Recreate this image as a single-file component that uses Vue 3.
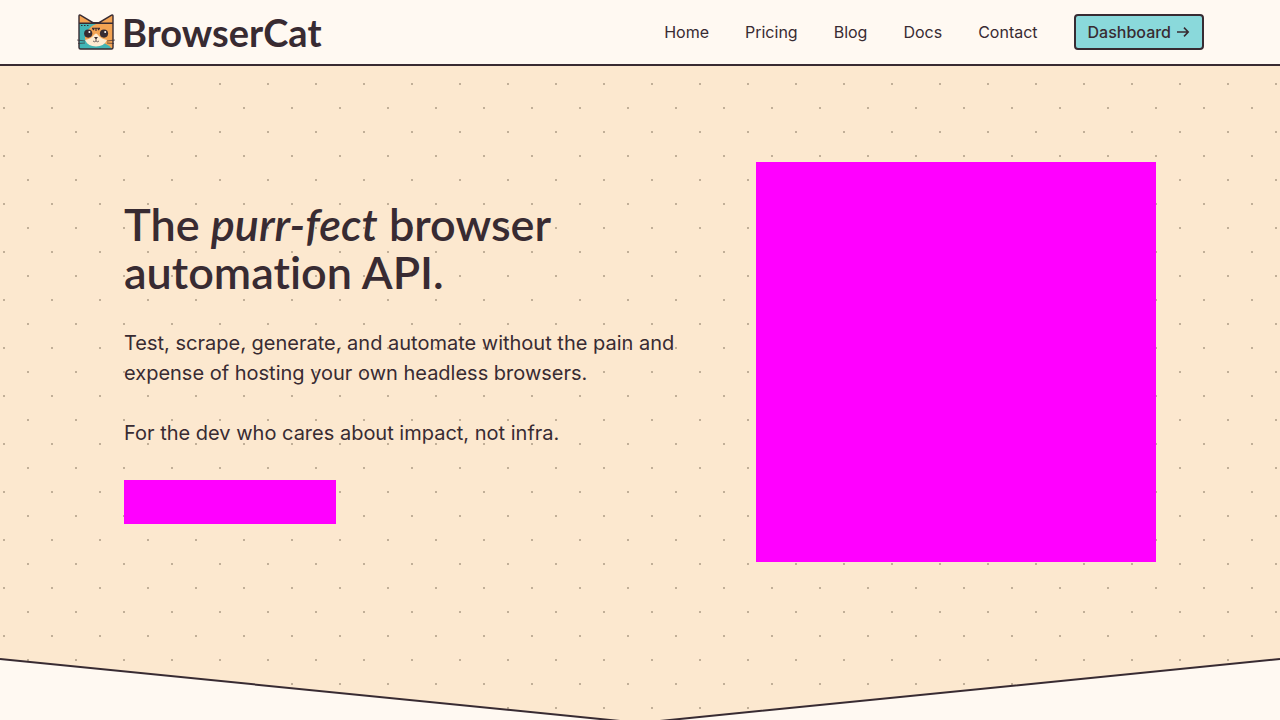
<script setup>
const links = ['Home', 'Pricing', 'Blog', 'Docs', 'Contact']
</script>

<template>
  <div class="page">
    <header class="header">
      <div class="bar">
        <a class="brand" href="#">
          <svg class="cat" viewBox="0 0 40 38" aria-hidden="true">
            <path d="M3 3Q3 1.5 4.4 2.2L17 9.7H23L35.6 2.2Q37 1.5 37 3V34.5Q37 36 35.5 36H4.5Q3 36 3 34.5Z" fill="#f3a353" />
            <path d="M3 10.5H22Q15 13 14 18Q8 20 9 26L12 31L28 30Q33 32 36 36H4.5Q3 36 3 34.5Z" fill="#42b4b5" />
            <path d="M9 24Q9 18 14 15Q17 11 23 11L31 17L32 26Q28 32 20 32T9 24Z" fill="#f3a353" />
            <path d="M9 27Q15 26 18 22Q20 19 22 22Q25 26 31 27Q28 33.5 20 33.5T9 27Z" fill="#fdebd2" />
            <path d="M3 3Q3 1.5 4.4 2.2L17 9.7H23L35.6 2.2Q37 1.5 37 3V34.5Q37 36 35.5 36H4.5Q3 36 3 34.5ZM3 10.2H37" fill="none" stroke="#382b32" stroke-width="1.4" />
            <path d="M5 12.5H6.5M8 12.5H9.5M11 12.5H12.5" stroke="#382b32" stroke-width="1" />
            <path d="M16.5 15.5L18 17M20 15.5V18M23.5 15.5L22 17M16 15.2H24" stroke="#382b32" stroke-width="1.1" />
            <circle cx="12.2" cy="20.6" r="4.1" fill="#382b32" />
            <circle cx="28" cy="20.6" r="4.1" fill="#382b32" />
            <circle cx="13.4" cy="19" r="1" fill="#fff" />
            <circle cx="29.2" cy="19" r="1" fill="#fff" />
            <path d="M18 24H22L20 26.4Z" fill="#382b32" />
            <path d="M20 25V28M17 28Q18.5 29.5 20 28Q21.5 29.5 23 28M1 27L9 28M2 30.5L9 30M39 27L31 28M38 30.5L31 30" fill="none" stroke="#382b32" stroke-width="0.7" />
          </svg>
          <span>BrowserCat</span>
        </a>
        <nav class="nav">
          <a v-for="link in links" :key="link" href="#">{{ link }}</a>
          <a class="dashboard" href="#">
            Dashboard
            <svg viewBox="0 0 14 14" aria-hidden="true">
              <path d="M1 7H12M8 2.6L12.2 7L8 11.4" fill="none" stroke="currentColor" stroke-width="1.6" />
            </svg>
          </a>
        </nav>
      </div>
    </header>

    <main class="hero">
      <div class="content">
        <div class="copy">
          <h1>The <em>purr-fect</em> browser automation API.</h1>
          <p>Test, scrape, generate, and automate without the pain and expense of hosting your own headless browsers.</p>
          <p>For the dev who cares about impact, not infra.</p>
          <div class="action"></div>
        </div>
        <div class="art"></div>
      </div>
      <svg class="divider" viewBox="0 0 1280 66" preserveAspectRatio="none" aria-hidden="true">
        <path d="M0 1L640 65L1280 1V66H0Z" fill="#fff9f2" />
        <path d="M0 1L640 65L1280 1" fill="none" stroke="#382b32" stroke-width="2" vector-effect="non-scaling-stroke" />
      </svg>
    </main>
  </div>
</template>

<style>
body {
  margin: 0;
  background: #fff9f2;
}
</style>

<style scoped>
.page {
  color: #382b32;
  font-family: Inter, "Liberation Sans", sans-serif;
}
a {
  color: inherit;
  text-decoration: none;
}
.header {
  background: #fff9f2;
  border-bottom: 2px solid #382b32;
}
.bar {
  box-sizing: border-box;
  max-width: 1128px;
  height: 64px;
  margin: 0 auto;
  display: flex;
  align-items: center;
  justify-content: space-between;
}
.brand {
  display: flex;
  align-items: center;
  gap: 6px;
  font: 700 38px/48px Lato, "Open Sans", sans-serif;
}
.cat {
  width: 40px;
  height: 38px;
}
.nav {
  display: flex;
  align-items: center;
  gap: 36px;
  font-size: 16px;
  line-height: 24px;
}
.dashboard {
  display: flex;
  align-items: center;
  gap: 5px;
  padding: 4px 12px;
  border: 2px solid #382b32;
  border-radius: 4px;
  background: #8ad9db;
  font-weight: 500;
}
.dashboard svg {
  width: 14px;
  height: 14px;
}
.hero {
  background-color: #fce8cf;
  background-image: url("data:image/svg+xml,%3Csvg xmlns='http://www.w3.org/2000/svg' width='48' height='48'%3E%3Cpath d='M27 17h2v2h-2zM3 41h2v2h-2z' fill='%23c1af98'/%3E%3C/svg%3E");
}
.content {
  box-sizing: border-box;
  max-width: 1080px;
  margin: 0 auto;
  padding: 96px 24px;
  display: flex;
  align-items: center;
  justify-content: space-between;
  gap: 48px;
}
.copy {
  flex: 1;
}
h1 {
  margin: 0 0 32px;
  max-width: 480px;
  font: 600 45px/48px Lato, "Open Sans", sans-serif;
  font-variant-ligatures: none;
}
p {
  margin: 0 0 30px;
  font-size: 20px;
  line-height: 30px;
}
.action {
  width: 212px;
  height: 44px;
  margin-top: 32px;
  background: #f0f;
}
.art {
  width: 400px;
  aspect-ratio: 1;
  background: #f0f;
}
.divider {
  display: block;
  width: 100%;
  height: 66px;
}
</style>
